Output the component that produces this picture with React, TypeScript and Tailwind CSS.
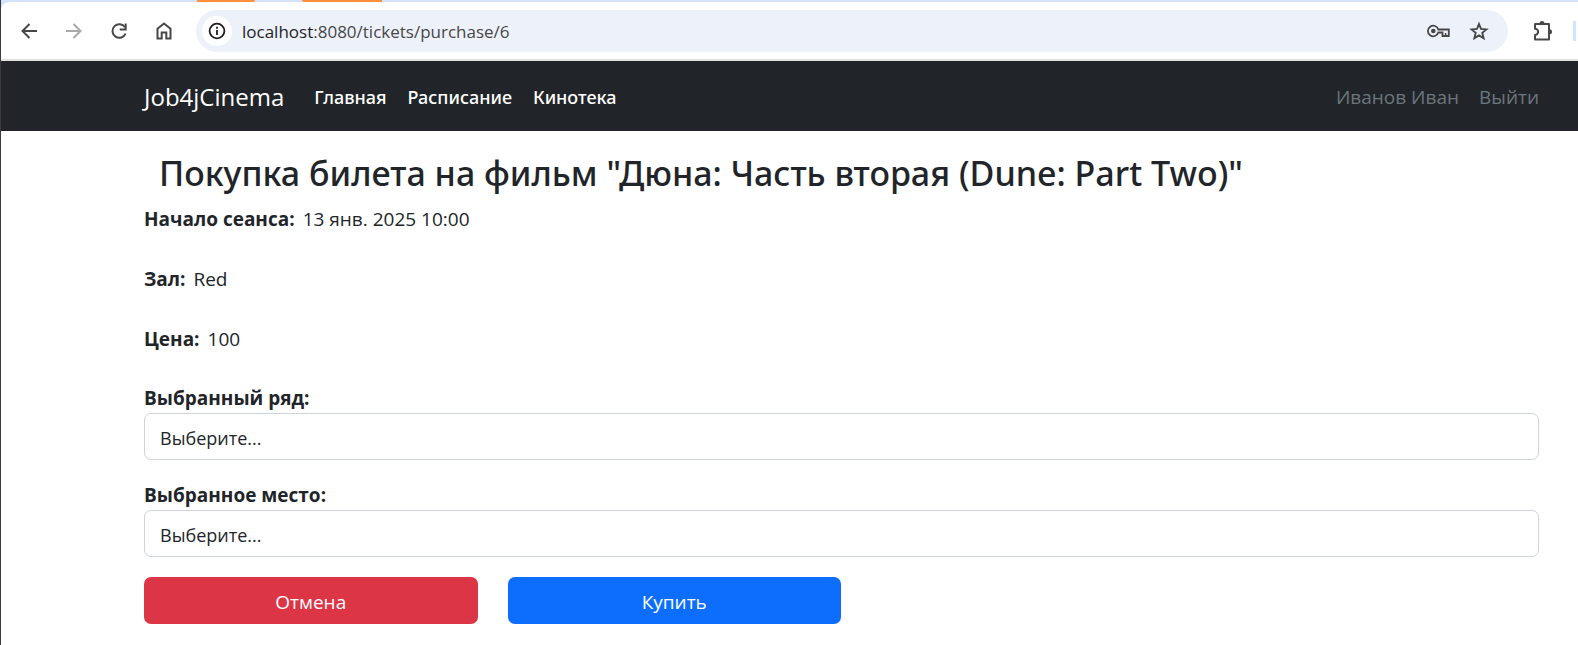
import React from "react";

const iconProps = {
  fill: "none",
  stroke: "currentColor",
  strokeWidth: 2,
  "aria-hidden": true,
} as const;

function BackIcon() {
  return (
    <svg {...iconProps} className="size-5" viewBox="0 0 20 20">
      <path d="M18 10H4M10.500 3L3.500 10l7 7" />
    </svg>
  );
}

function ForwardIcon() {
  return (
    <svg {...iconProps} className="size-5" viewBox="0 0 20 20">
      <path d="M2 10h14M9.500 3l7 7-7 7" />
    </svg>
  );
}

function ReloadIcon() {
  return (
    <svg {...iconProps} className="size-5" viewBox="0 0 20 20">
      <path d="M16.600 12.500A6.800 6.800 0 1 1 16 6.300" />
      <path d="M16.700 2.500v6h-6" />
    </svg>
  );
}

function HomeIcon() {
  return (
    <svg {...iconProps} className="size-5" viewBox="0 0 20 20">
      <path d="M3.500 7.800L10 2.500l6.500 5.300V17.500h-4.200v-6H7.700v6H3.500z" />
    </svg>
  );
}

function InfoIcon() {
  return (
    <svg {...iconProps} className="size-5" viewBox="0 0 20 20">
      <circle cx="10" cy="10" r="7.400" strokeWidth="1.800" />
      <path d="M10 9v5M10 5.800v2" strokeWidth="1.800" />
    </svg>
  );
}

function KeyIcon() {
  return (
    <svg {...iconProps} className="h-5 w-6" viewBox="0 0 24 20">
      <path d="M11.300 8.500a5.300 5.300 0 1 0 0 3H15.500v3.500h6.300V8.500z" strokeWidth="1.800" />
      <path d="M18.600 15v-3" strokeWidth="1.500" />
      <circle cx="6.300" cy="10" r="2.300" fill="currentColor" stroke="none" />
    </svg>
  );
}

function StarIcon() {
  return (
    <svg {...iconProps} className="size-5" viewBox="0 0 20 20">
      <path d="M10 3l2 4.900 5.400.500-4.100 3.500 1.300 5.300L10 14.400l-4.600 2.800 1.300-5.300-4.100-3.500 5.400-.500z" strokeWidth="1.900" />
    </svg>
  );
}

function ExtensionsIcon() {
  return (
    <svg {...iconProps} className="size-6" viewBox="0 0 24 24">
      <path d="M4 5h14v15.500H4v-4.500a3 3 0 0 0 0-6.300z" strokeLinejoin="round" />
      <path d="M8.500 4.500a2.500 2.500 0 0 1 5 0zM18.500 10.200a2.500 2.500 0 0 1 0 5z" fill="currentColor" stroke="none" />
    </svg>
  );
}

function BrowserBar() {
  return (
    <header className="border-b-2 border-[#dfe3e0] bg-[#d3e3fd]">
      <div className="flex h-[2px] pl-[196px]">
        <div className="w-[58px] rounded-br bg-[#ff8e3c]" />
        <div className="ml-[47px] w-[80px] rounded-bl bg-[#ff8e3c]" />
      </div>
      <div className="flex h-[57px] items-center rounded-tl-lg bg-white pr-[2px] pl-[18px] text-[#474747]">
        <div className="flex items-center gap-[25px]">
          <button type="button" aria-label="Назад"><BackIcon /></button>
          <button type="button" aria-label="Вперёд" className="text-[#a9a9a9]"><ForwardIcon /></button>
          <button type="button" aria-label="Обновить"><ReloadIcon /></button>
          <button type="button" aria-label="Домой"><HomeIcon /></button>
        </div>
        <div className="ml-[22px] flex h-[42px] flex-1 items-center rounded-full bg-[#ecf1fa] pr-[19px] pl-[6px]">
          <button type="button" aria-label="Сведения о сайте" className="flex size-[30px] items-center justify-center rounded-full bg-white text-[#1f1f1f]">
            <InfoIcon />
          </button>
          <p className="ml-[10px] flex-1 pt-[2px] text-[17px]">
            <span className="text-[#1f1f1f]">localhost</span>:8080/tickets/purchase/6
          </p>
          <div className="flex items-center gap-[18px]">
            <button type="button" aria-label="Пароли"><KeyIcon /></button>
            <button type="button" aria-label="Добавить в закладки"><StarIcon /></button>
          </div>
        </div>
        <button type="button" aria-label="Расширения" className="ml-[23px]"><ExtensionsIcon /></button>
        <div className="ml-[18px] h-5 w-[3px] bg-[#d3e3fd]" />
      </div>
    </header>
  );
}

function NavBar() {
  return (
    <nav className="flex h-[70px] items-center bg-[#212529] pt-[2px] pr-[39px] pl-[143px] text-[19px] text-white">
      <a href="#" className="mr-[30px] text-[24px]">Job4jCinema</a>
      <div className="flex flex-1 gap-[21px] font-['Noto_Sans','Open_Sans',sans-serif] text-[18px] font-medium">
        <a href="#">Главная</a>
        <a href="#">Расписание</a>
        <a href="#">Кинотека</a>
      </div>
      <div className="flex gap-5 text-[#6c757d]">
        <span>Иванов Иван</span>
        <a href="#">Выйти</a>
      </div>
    </nav>
  );
}

function Detail({ label, value }: { label: string; value: string }) {
  return (
    <div className="mb-[30px] flex gap-2 last:mb-[29px]">
      <dt className="font-bold">{label}</dt>
      <dd>{value}</dd>
    </div>
  );
}

function Picker({ id, label }: { id: string; label: string }) {
  return (
    <div className="flex flex-col">
      <label htmlFor={id} className="font-bold">{label}</label>
      <select id={id} className="h-[47px] appearance-none rounded-[7px] border border-[#ced4da] bg-white px-[15px] pt-[2px] text-[18px]">
        <option>Выберите...</option>
      </select>
    </div>
  );
}

export default function App() {
  return (
    <div className="min-h-screen border-l border-[#3f3838] bg-white font-['Open_Sans','Noto_Sans',sans-serif]">
      <BrowserBar />
      <NavBar />
      <main className="pt-[18px] pr-[39px] pb-[20px] pl-[143px] text-[19px] leading-[30px] text-[#212529]">
        <h1 className="mb-[7px] px-[15px] font-['Noto_Sans','Open_Sans',sans-serif] text-[34px] leading-[48px] font-medium">
          Покупка билета на фильм "Дюна: Часть вторая (Dune: Part Two)"
        </h1>
        <form>
          <dl>
            <Detail label="Начало сеанса:" value="13 янв. 2025 10:00" />
            <Detail label="Зал:" value="Red" />
            <Detail label="Цена:" value="100" />
          </dl>
          <div className="flex flex-col gap-5">
            <Picker id="row" label="Выбранный ряд:" />
            <Picker id="place" label="Выбранное место:" />
            <div className="grid max-w-[697px] grid-cols-2 gap-[30px] text-white">
              <button type="button" className="h-[47px] rounded-[7px] bg-[#dc3545] pt-[2px]">Отмена</button>
              <button type="button" className="h-[47px] rounded-[7px] bg-[#0d6efd] pt-[2px]">Купить</button>
            </div>
          </div>
        </form>
      </main>
    </div>
  );
}
